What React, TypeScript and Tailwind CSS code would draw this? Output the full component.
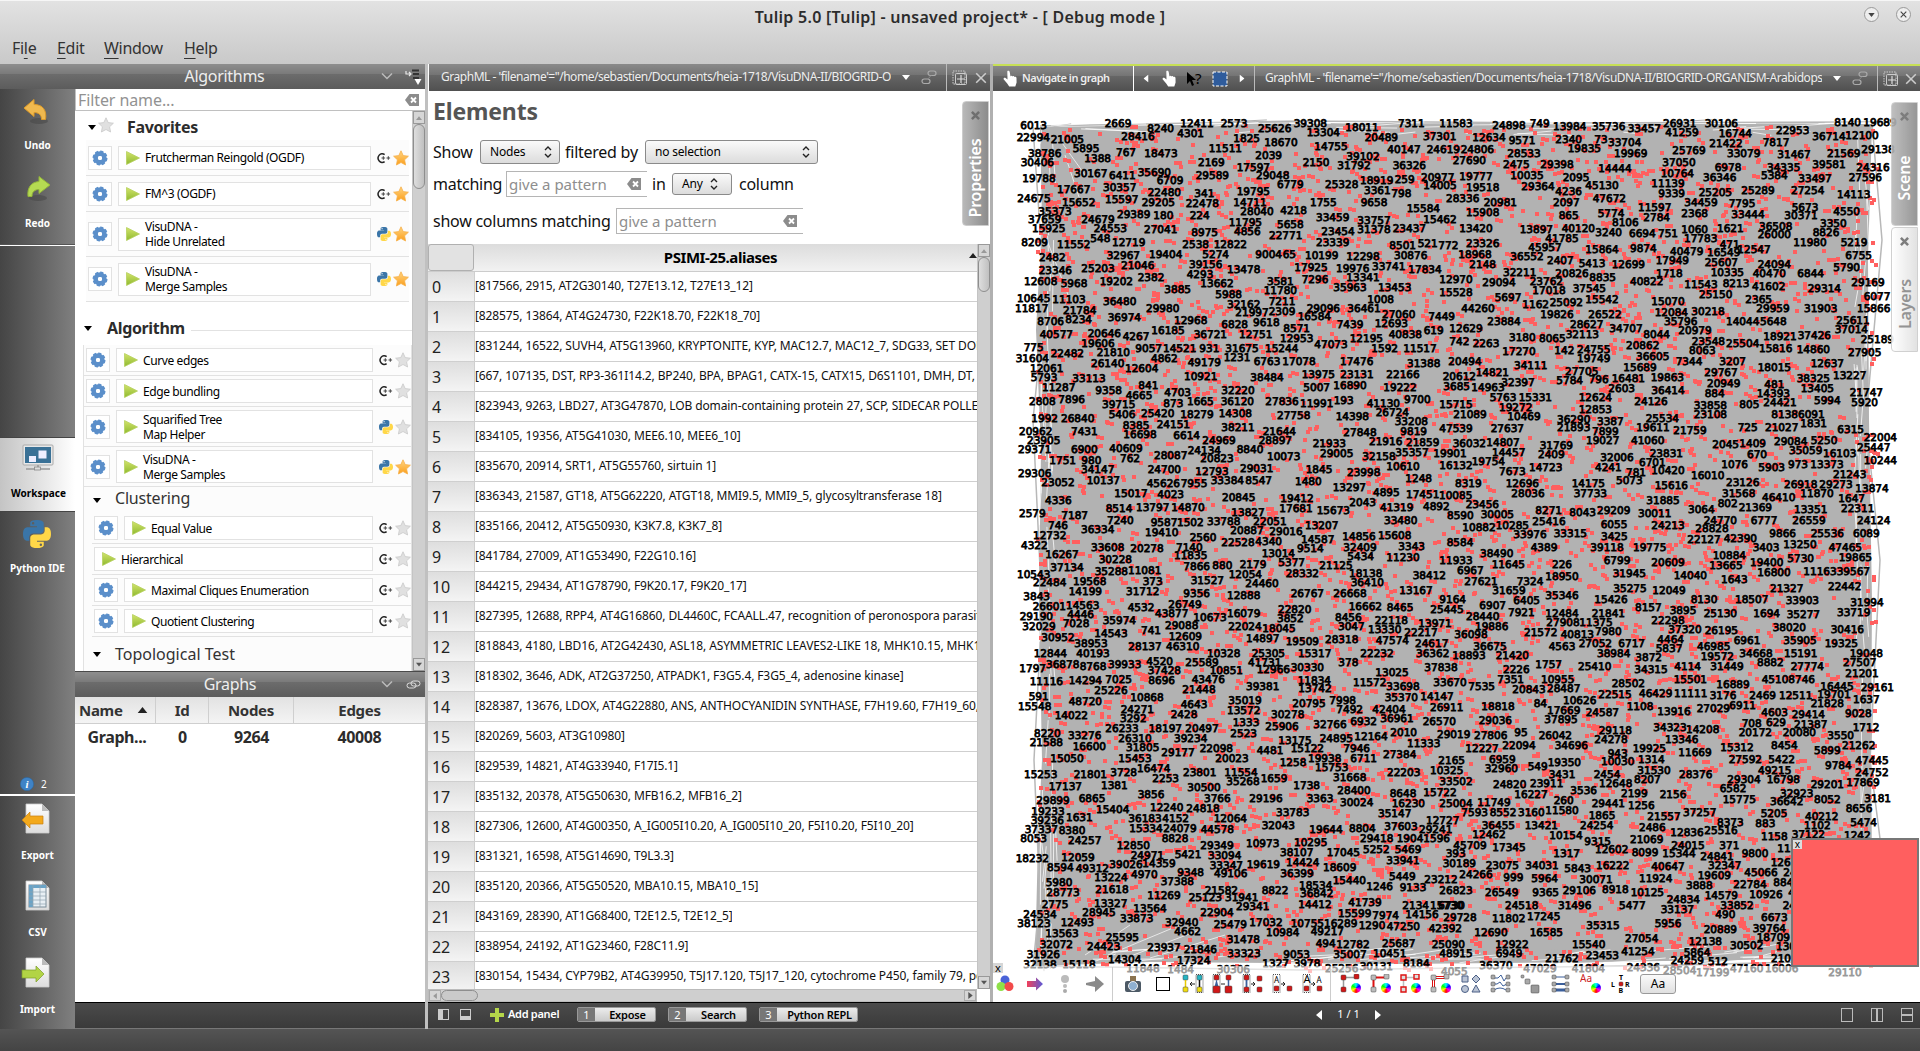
import React from "react";

/* ---------- graph view data ---------- */
/* Every tile lists "x y id" triples, in tile units, for the node labels. */
type Tile = { ox: number; oy: number; sx: number; sy: number; d: string };
const TILES: Tile[] = [
  { ox: 990, oy: 60, sx: 3, sy: 3, d: `
131 195 6013 384 188 2669 512 203 8240 621 188 12411 732 190 2573 854 203 25626 961 188 39308 1000 215 13304 1116 200 18011 1264 188 7311 1398 188 11583
130 231 22994 232 238 21005 444 228 28416 602 220 4301 770 233 1825 873 245 18670 1174 230 20489 1349 228 37301 1497 231 12634
288 265 5895 164 278 38786 408 275 767 513 278 18473 706 265 11511 1023 258 14755 1242 266 40147 1360 266 24619 1462 266 24806
323 293 1388 142 305 30406 836 286 2039 664 305 2169 790 321 17597 978 305 2150 1119 288 39102 1092 315 31792 1258 315 36326 1438 301 27690
302 338 30167 397 345 6411 493 335 35690 540 360 6709 147 353 19788 667 345 29589 848 345 29048 901 373 6779 1055 373 25328 1160 361 18919 1244 358 259 1343 350 20977 1458 348 19777
251 386 17667 389 380 30357 523 396 22480 643 400 341 790 393 19795 1162 391 3361 1234 400 798 1350 376 14005 1478 380 19518
132 415 24675 266 425 15652 395 418 15597 505 425 29205 637 430 22478 780 425 14711 1000 425 1755 1152 425 9658 1418 413 28336
195 453 35373 164 476 37659 324 476 24679 431 461 29389 520 465 180 629 465 224 801 453 28040 911 451 4218 1028 470 33459 1300 445 15584 1478 455 15908
176 505 15925 361 505 24553 512 506 27041 766 486 11795 901 493 5658 1152 480 33757 1350 478 15462
644 516 8975 772 513 4856 887 526 22771 1044 513 23454 1152 506 31378 1258 505 23437 1458 505 13420
134 545 8209 251 553 11552 331 535 548 416 545 12719 617 553 2538 721 551 12822 1028 545 23339 1238 556 8501 1313 550 521 1375 556 772 1478 548 23326
187 591 2482 400 586 32967 527 581 19404 677 583 5274 836 583 9004 898 583 65 995 586 10199 1119 588 12298 1262 585 30876 1455 583 18968
196 630 23346 324 623 25203 443 616 21046 647 611 39156 761 628 13478 963 621 17925 1088 623 19976 1196 618 33741 1305 626 17834 1478 611 2148
152 663 12608 252 668 5968 379 663 19202 483 651 2382 630 641 4293 681 668 13662 871 663 3581 975 656 7296 1119 651 13341 1398 656 12970
563 686 3885 716 703 5988 871 691 11780 1080 680 35963 1214 680 13453 1398 695 15528
131 715 10645 237 716 11103 389 723 36480 761 731 32162 876 723 7211 1172 716 1008
125 743 11817 269 750 21784 518 743 29980 786 756 21997 876 753 2309 1000 743 29096 1122 743 36461 1226 761 27060 1464 743 44260
182 783 8706 266 778 8234 403 771 36974 602 780 12968 734 791 6828 829 785 9618 973 768 16584 1080 793 7439 1204 788 12693 1355 768 7449
199 823 40577 343 818 20646 438 828 4267 534 810 16185 661 823 36721 797 823 12751 920 803 8571 920 835 12953 1129 835 12195 1246 821 40838 1331 811 619 1428 803 12629
324 848 19606 131 861 775 476 863 9057 569 865 14521 658 863 931 756 863 31675 875 865 15244 1023 853 47073 1184 863 1592 1290 863 11517 1408 843 742 1488 850 2263
232 878 22482 370 875 21810` },
  { ox: 1480, oy: 60, sx: 3, sy: 3, d: `
87 195 24898 179 190 749 269 198 13984 386 198 35736 493 205 33457 599 188 26931 606 215 41259 724 190 30106 766 218 16744 938 211 22953 1103 186 8140 1200 186 19689
126 240 9571 266 238 2340 363 236 73 434 246 33704 738 250 21422 888 246 7817 1047 228 36714 1146 226 12100
132 280 28533 313 265 19835 452 278 19969 627 270 25769 791 280 33079 942 283 31467 1091 278 21569 1194 266 29138
109 313 2475 231 313 29398 405 325 14444 597 306 37050 592 338 10764 744 320 6978 911 320 34335 883 345 5384 1047 311 39581 1179 321 24316
141 345 10035 288 350 2095 174 378 29364 366 376 45130 266 393 4236 564 368 11139 719 350 36346 1005 355 33497 1156 350 27596
575 398 9339 706 395 25205 834 391 25289 983 390 27254 1121 403 14113
61 425 20981 259 425 2097 388 413 47672 524 440 11597 663 425 34459 786 428 7795 975 440 5673 1100 453 4550
266 465 865 393 458 5774 436 485 8106 530 470 2784 644 458 2368 804 463 33444 963 466 30371 1060 488 3350
169 506 13897 295 505 40120 386 516 3240 487 518 6694 564 518 751 644 506 1060 751 505 1621 887 498 36508
246 533 41785 662 533 17783 749 551 471 883 523 26000 1038 516 8826 990 545 11980 1122 545 5219
195 561 45957 366 566 15864 490 565 9874 620 573 40479 731 576 16549 822 566 12547 1136 585 6755
141 588 36552 241 600 2407 336 610 5413 445 611 12699 577 601 17949 724 605 25607 883 611 24094 1100 621 5790
119 635 32211 276 640 20826 368 651 8835 568 640 1718 742 636 10335 868 640 40470 992 640 6844
57 665 29094 199 663 23762 500 663 40822 663 671 11543 768 668 8213 866 678 41602 1164 666 29169
207 690 17018 328 685 37545 84 711 5697 707 703 25150 1033 685 29314
167 733 1162 259 725 25092 366 718 15542 564 723 15070 836 716 2365 1191 708 6077
231 761 19826 375 763 26522 574 756 12084 684 753 30218 879 745 29959 1022 745 31903 1181 743 15866
72 783 23884 320 793 28627 438 805 34707 602 783 35796 645 811 20979 788 783 14044 880 783 5648 1119 780 25611 1114 808 37014
127 830 3180 217 833 8065 307 823 32113 530 823 8044 685 843 23548 788 848 25504 900 828 18921 1003 825 37426 1192 838 25189
117 873 17270 253 871 142 341 868 24755 341 895 19749 488 855 20862 518 888 36605 667 871 8063 887 865 15816 1000 868 14860 1154 875 27905
152 915 34111 627 903 7344 758 903 3207 883 921 18015 1042 908 12637
37 935 14821 305 933 27705 114 965 32397 269 961 5784 356 958 796 445 953 16481 562 951 19863 480 921 15689 723 936 29767 1000 953 38325 1109 945 13227
425 983 2603 564 990 36414 731 970 20949 704 998 884 883 973 481 880 998 14393 1012 983 13405 1159 995 21747
69 1011 5763 166 1011 15331 346 1011 12624 107 1040 19272 346 1046 12853 513 1023 24126 691 1036 33858 808 1031 805 900 1026 24421 1042 1021 5994 1154 1025 5920` },
  { ox: 1000, oy: 350, sx: 3, sy: 2.8, d: `
97 22 31604 140 50 12061 323 38 26140 425 50 12604 493 22 4862 613 33 49179 711 20 1231 801 30 6763 897 30 17078 1070 30 17476 1271 36 31388 1395 30 20494
132 75 5793 267 78 33113 602 72 10921 801 75 38484 955 68 13975 1071 68 23131 1209 68 22166 1378 72 20612
176 105 11287 326 111 9358 445 97 841 417 125 4665 533 117 4703 714 113 32220 950 105 5007 1050 97 16890 1200 105 19222 1370 100 3685 1464 103 14963
127 144 2808 215 137 7896 356 151 39715 520 150 873 601 144 1665 712 142 36120 846 142 27836 950 150 11991 1031 141 193 1150 149 41130 1252 137 9700 1368 151 15715
134 191 1992 233 192 26840 366 180 5406 473 178 25420 591 179 18279 706 177 14308 881 181 27758 1057 186 14398 1177 174 26724 1410 179 21089
107 227 20962 253 227 7431 408 210 8385 520 208 24151 714 215 38211 838 227 21644 1080 230 27848 1234 199 33208 1241 227 9819 1368 220 47539
131 252 23905 420 235 16698 560 237 6614 657 252 24969 826 252 28897 988 262 21933 1157 255 21916 1268 258 21859 1408 261 36032
104 278 29371 253 278 6900 378 274 40609 613 279 24134 750 278 8840 512 293 28087 1010 290 29005 1137 296 32158 1236 286 35357 1350 288 19901
188 307 1751 274 308 980 390 303 762 651 303 20823 851 297 10073 1209 325 10610 1368 322 16132 1465 310 19754
104 344 29306 293 334 34147 493 334 24700 636 339 12793 770 330 29031 957 334 1845 1091 341 23998 1256 360 1248
174 369 23052 310 365 10137 490 373 45626 582 374 7955 682 365 33384 776 364 8547 925 367 1480 1048 385 13297 1405 373 8319
393 402 15017 512 404 4023 716 411 20845 891 415 19412 1159 399 4895 1268 403 17451 1367 407 10085
175 419 4336 357 442 8514 458 439 13797 564 439 14870 744 453 13827 888 443 17681 1000 448 15673 1088 425 2043 1190 439 41319 1309 436 4892 1447 431 23456
97 457 2579 224 462 7187 361 475 7240 492 481 9587 571 483 1502 671 479 33788 810 478 22051 1202 475 33480 1381 463 8590 1492 460 30005
174 490 746 293 502 36334 485 511 19410 741 503 20887 858 506 29016 965 489 13207 1437 495 10882
149 518 12732 609 525 2560 714 539 22528 806 534 4340 953 530 14587 1077 520 14856 1184 519 15608
103 546 4322 323 551 33608 441 554 20278 568 551 7140 835 568 13014 931 554 9514 1080 551 32409 1235 550 3343 1380 538 8584
186 571 16267 346 586 30228 572 575 11835 1082 576 5434 1209 579 11230 1368 589 11933 1490 570 38490
201 608 37134 334 620 35288 434 615 11081 590 605 7866 667 601 880 759 599 2179 875 595 5377 1008 601 21125 1411 617 6967
101 627 10543 149 650 22484 269 648 19568 458 647 373 622 643 31527 736 627 12054 907 624 28332 1097 624 18138 1288 629 38412
256 674 14199 786 653 24460 1102 650 36410 1443 648 27621
110 690 3843 428 675 31712 590 682 9356 731 685 12888 922 681 26767 1050 682 26668 1248 673 13167 1358 698 9164 1478 715 6907
148 716 26601 248 713 14563 423 720 4532 555 711 26749 884 726 22820 1096 718 16662 1200 720 8465 1341 726 25445
109 745 29190 242 739 4446 228 765 7028 358 756 35974 515 737 43877 630 747 10673 731 736 16079 871 752 3852 1045 747 8456 1174 756 22118 1305 764 13971 1448 745 28440
117 772 32029 453 785 741 545 770 29088 735 772 22024 837 780 18045 1054 772 3047 1154 782 13330 1475 772 19886
174 803 30952 333 792 14543 556 801 12609 788 806 14897 1263 789 22217 1413 796 36098
273 822 38953 435 828 28137 548 828 46310 907 814 19509 1025 810 28318 1177 813 47574 1295 820 24617 1470 828 36675
151 848 12844 279 848 40193 671 848 10328 805 848 25305 944 848 15317 1131 848 22232 1298 848 36362 1407 853 18893
98 890 1797 188 879 36878 279 886 8768 374 879 39933 479 872 4520 606 873 25589 794 873 41731 1045 873 378 493 895 37428 679 896 10851 820 894 12966 922 889 30330 1323 887 37838
139 928 11116 256 925 14294 356 922 7025 485 924 8696 625 922 43476 943 924 11834 1176 902 13025 1109 931 11572 1209 940 33698 1350 931 33670 1445 940 7535
333 953 25226 597 950 21448 788 940 39381 945 947 13742
116 968 591 256 982 48720 441 972 10868 735 981 35019 582 991 4643 927 988 20795 1028 980 7998 1204 972 35370 1311 968 14147
104 996 15548 412 1005 24271 731 1007 13572 1049 1005 7492 1167 1005 42404 1340 1000 26911 1494 996 18818
214 1023 14022 400 1032 3292 552 1019 2428 863 1019 30278 1191 1032 36961 738 1042 1333 990 1048 32766 1091 1040 6932 1318 1040 26570 1486 1035 29036
366 1060 26233 496 1059 18197 606 1060 20497 846 1054 25906 1211 1069 2010 731 1073 2523
142 1073 8220 139 1098 21588 254 1079 33276 405 1088 26310 572 1088 39234 885 1091 13175 1009 1086 24895 1113 1082 12164 1361 1075 29019 1472 1078 27806
268 1108 16600 428 1111 31805 649 1114 22098 534 1126 29177 810 1120 4481 922 1115 15122 1070 1114 7946 1271 1100 11333 1446 1114 12227
201 1144 15050 405 1144 15453 696 1143 20023 879 1155 1258 974 1144 19938 1091 1144 6711 1199 1131 27384 1355 1147 2165
122 1187 15253 271 1187 21801 371 1182 3728 461 1170 16474 599 1182 23801 723 1181 11554 995 1168 15753 1211 1182 22203 1340 1176 10325
497 1198 2253 729 1206 35268 822 1199 1659 1049 1196 31668 1368 1207 33502
196 1220 17137 343 1219 1381 612 1223 30500 920 1218 1738 1062 1232 28400 1209 1240 8648 1320 1238 15722
159 1260 29899 276 1256 6865 453 1244 3856 652 1254 3766 798 1256 29196 960 1255 3363 1070 1266 30024 1225 1268 16230 1368 1268 25004 1482 1266 11749
144 1292 19233 338 1286 15404 500 1281 12240 609 1284 24818 878 1293 33783 1184 1297 35147 1424 1295 7593
142 1315 39236 238 1308 1631 435 1311 36183 527 1311 4152 691 1311 12064 835 1330 32043 1328 1315 12727
124 1342 37337 216 1343 8380 438 1340 15334 540 1340 24079 652 1341 44578 978 1342 19644 1087 1339 8804 1203 1332 37603 1307 1342 29241
101 1368 8053 254 1373 24257 525 1367 8828 788 1380 10973 932 1379 10295 1130 1367 29418 1230 1367 1904 1310 1367 1596
400 1386 12850 651 1386 29349 890 1405 38107 1030 1405 17045 1129 1397 5252 1224 1397 5469
97 1423 18232 234 1419 12059 442 1414 24971 564 1411 5421 674 1414 33094 908 1433 14424 1209 1427 33941
181 1449 8594 277 1451 49312 378 1440 39026 477 1437 14359 679 1441 33347 790 1439 19619 1019 1448 18609
333 1477 13224 433 1467 4970 572 1461 9348 692 1465 49106 891 1465 36399 1207 1473 5449
177 1489 5980 532 1487 37388 1048 1485 15440 1323 1481 23212
189 1517 28773 336 1509 21618 664 1511 21582 825 1512 8822 947 1499 18534 1139 1500 1246 1239 1503 9133 1368 1511 26823
492 1525 11269 616 1532 25123 725 1532 31941 950 1521 36842` },
  { ox: 1470, oy: 410, sx: 3, sy: 3, d: `
162 18 10469 311 26 36290 421 33 3387 577 23 25534 721 11 23108 944 11 8138 1024 11 6091 1031 38 1831 1142 56 6315
112 53 27637 311 51 21893 406 63 7899 549 50 19611 660 61 21759 833 50 725 935 50 21027
99 95 14807 259 105 31769 398 91 19027 533 91 41060 767 101 2045 848 98 1409 962 93 29084 1062 90 5250 1231 81 22004
116 126 14457 244 133 2409 441 141 32006 589 128 23831 547 156 6701 861 131 670 1007 121 35059 1109 128 16103 1211 111 25447
127 183 7673 227 171 14723 415 171 4241 498 186 781 594 181 10420 794 161 1076 905 171 5903 984 163 973 1071 163 13373 1231 151 10244
157 218 12696 355 220 14175 478 211 5073 604 226 15616 713 196 16010 818 216 23126 992 221 26918 1098 221 29273 1139 191 21243 1206 233 13874
174 250 28036 361 250 37733 579 271 31885 806 250 31568 773 278 802 926 261 46410 1041 250 11870 1145 263 1647
236 300 8271 338 306 8043 431 300 29209 554 310 30011 694 298 3064 856 291 21369 1022 296 13351 1163 295 22311
127 345 10285 237 333 25416 432 343 6055 594 345 24213 751 330 24770 882 330 6777 1017 330 26559 1211 330 24124
180 371 33976 301 370 33315 433 378 3425 726 355 28828 702 386 22127 811 383 42390 938 370 9866 1072 368 25536 1189 368 6089
222 410 4389 411 410 39118 539 410 19775 888 410 3403 990 403 13250 1126 411 47465
115 461 11645 276 461 226 441 450 6799 594 456 20609 778 435 10884 768 465 13665 890 455 19400 992 445 5730 1156 440 19865
180 513 7324 276 498 18950 478 490 31945 661 495 14040 793 506 1643 912 486 16800 1050 483 11163 1150 483 39567
117 541 31659 480 533 35275 597 541 12049 950 533 21327 1124 528 22442
170 570 6405 276 555 35346 423 568 15426 535 590 8157 702 568 8130 845 568 18507 997 570 33903 1191 576 31994
154 605 7921 276 608 12484 415 608 21841 639 600 3895 751 608 25130 890 608 1694 1000 611 35277 1151 606 33719
279 636 27908 378 635 11375 594 631 22298 645 658 37320 754 660 26195 958 651 38020 1132 658 30416
212 666 21572 322 673 40813 415 663 7980 602 688 4464 831 690 6961 990 691 35905
276 708 4563 376 700 27052 485 700 6717 597 715 5837 731 708 46985 1114 700 19325
127 736 21420 431 728 38984 536 740 3872 742 738 19572 858 728 34668 901 755 8882 992 730 15191 1189 728 19048
236 761 1757 139 776 2226 374 768 25410 543 776 34315 653 768 4114 771 768 31449 1012 768 27774 1169 755 27507
122 806 7351 263 808 10955 475 820 28502 661 806 15501 789 821 16889 925 808 45108 1005 808 746 1176 788 21201
177 836 20843 281 833 28487 435 853 22515 557 850 46429 662 850 11111 759 856 3176 878 855 2469 977 855 12511 1101 828 16445 1222 831 29161
211 878 84 329 870 10626 281 901 17669 510 888 1108 397 906 24587 612 903 13916 730 893 27029 818 885 6911 1092 853 19701 1072 880 21828 1189 866 1637
273 926 37895 914 905 4603 1015 911 29414 1165 908 9028
153 965 95 256 975 26042 436 960 29118 423 988 24278 600 950 34323 698 956 14208 845 940 708 918 936 629 1022 943 21387 856 966 20172 988 966 20080 1188 950 1712
147 1006 22094 304 1005 34696 635 988 13346 538 1015 19925 675 1026 11669 801 1011 15312 943 1006 8454 1112 976 3550 1166 1006 21262
97 1048 6959 94 1075 32960 203 1068 549 283 1056 19350 443 1028 943 443 1053 10030 544 1048 1314 826 1046 27592 935 1048 5422 1072 1021 5899 1206 1051 47445
276 1091 3431 411 1091 2454 552 1080 31530 677 1091 28376 914 1080 49215 1105 1066 9784 1206 1086 24752
119 1121 24820 230 1120 23911 437 1120 12648 532 1108 8207 822 1106 29304 940 1106 16798 1072 1121 29201 1179 1116 17869
183 1151 16227 341 1141 3536 493 1148 2199 609 1151 2156 789 1133 6582 980 1148 32923
281 1171 260 415 1178 29441 514 1185 1256 808 1166 15775 950 1173 36642 1072 1168 8052 1223 1163 3181
99 1205 8552 184 1205 3160 276 1200 11580 396 1216 1865 582 1218 21557 689 1205 37257 912 1208 5205 1167 1195 8656 1055 1218 40212` },
  { ox: 1440, oy: 820, sx: 3, sy: 3, d: `
175 16 36455 304 16 13421 470 15 24254 637 20 2486 741 35 12836 843 30 25516 871 5 8373 976 8 883 1132 15 1102 1271 6 5474
147 43 12462 378 45 10154 473 63 9315 620 56 21069 1003 48 1158 1105 43 37122 1252 46 1242
90 75 45709 207 81 17345 380 100 1317 515 88 12602 615 96 8099 717 100 15344 744 75 24015 868 75 371 831 108 24841 945 98 9800 1052 83 1123
47 100 393 58 130 30189 187 135 23075 306 135 34031 413 145 5843 518 135 16222 684 138 40647 854 135 32347 1042 125 12652
108 163 24266 220 170 999 314 175 5964 468 178 30071 647 175 11924 823 166 19609 778 196 3888 963 156 45066 1060 156 241 930 193 22784 1040 186 8841
185 215 26549 317 215 9365 418 210 29106 526 206 8918 622 215 10125 730 236 24834 844 226 14579 978 221 10926 1085 215 4412
35 255 6730 245 255 24518 404 256 31496 577 255 5477 712 266 33137 891 255 33852 856 283 490 1068 255 2451
60 290 29728 206 295 11802 311 288 17245 489 315 35315 684 310 5956 841 326 20889 1003 291 6673 988 323 39764 1000 350 18709
153 335 12690 319 335 16585 605 353 27054 796 363 12138 920 376 30502 1058 378 13072
216 373 12922 207 400 6949 446 371 15540 594 393 41254 771 396 5864 1043 415 21022
366 413 21762 487 406 23453 742 420 24259 834 423 512
168 435 36370 300 443 47029 445 443 41804 610 440 24336 719 450 28504 818 455 17199 920 443 47160 1025 445 16006 1215 455 29110 43 453 4055` },
  { ox: 980, oy: 900, sx: 3, sy: 3, d: `
225 12 2775 392 8 13327 510 25 13564 357 35 28945 818 18 29341 1005 13 14412 1155 5 41739 1307 15 2134 1400 15 15730
180 42 24534 470 55 33873 711 35 22904 1124 38 15599 1217 46 7974 1326 43 14156
162 68 38123 292 65 12493 605 66 32940 751 73 25479 858 66 17032 982 70 10755 1082 70 16289 1176 75 1290 1270 78 47250 1396 83 42392
246 100 13563 623 93 4662 908 95 10984 1042 93 49217
427 110 25595 790 116 31478 1037 130 494 1119 131 12782 1256 128 25687 1405 133 25090
229 133 32072 371 138 24423 552 140 23937 661 146 21846 792 158 33323 950 161 9053 1110 163 35007 1229 160 10451 1428 160 48915
190 161 31926 434 178 14304 641 180 17324 887 190 1327 981 190 3978 1309 188 8184
180 193 32138 297 191 15118 489 205 11848 602 208 1484 760 208 30306 1085 203 25256 1189 197 30131` },
];

type Label = { x: number; y: number; t: string };
const LABELS: Label[] = TILES.flatMap((tile) => {
  const n = tile.d.trim().split(/\s+/);
  const out: Label[] = [];
  for (let i = 0; i + 2 < n.length; i += 3) {
    out.push({ x: tile.ox + Number(n[i]) / tile.sx, y: tile.oy + Number(n[i + 1]) / tile.sy, t: n[i + 2] });
  }
  return out;
});

function rng(seed: number) {
  let s = seed;
  return () => {
    s = (s * 1664525 + 1013904223) % 4294967296;
    return s / 4294967296;
  };
}

/* Scattered node squares, drawn as one path. */
const DOTS = (() => {
  const r = rng(77);
  let d = "";
  for (let i = 0; i < 5000; i++) {
    const x = 1036 + r() * 838;
    const y = 124 + r() * 842;
    const n = r() < 0.3 ? 2 : 1;
    for (let k = 0; k < n; k++) {
      const px = Math.round(x + k * 4);
      const py = Math.round(y + k * (r() * 5 - 1));
      d += `M${px} ${py}h4v4h-4z`;
    }
  }
  return d;
})();

const hair = (seed: number, count: number, spread: number) => {
  const r = rng(seed);
  let d = "";
  for (let i = 0; i < count; i++) {
    const side = Math.floor(r() * 4);
    const t = r();
    const len = 12 + r() * 60;
    const off = r() * spread;
    const skew = r() * 8 - 4;
    if (side === 0) d += `M${1040 + off} ${130 + t * 800}l${skew} ${len}`;
    else if (side === 1) d += `M${1868 - off} ${130 + t * 800}l${skew} ${len}`;
    else if (side === 2) d += `M${1040 + t * 780} ${122 + off}l${len} ${skew}`;
    else d += `M${1040 + t * 780} ${964 - off}l${len} ${-skew - 4}`;
  }
  return d;
};

function GraphCanvas() {
  return (
    <svg className="absolute inset-0" width="927" height="911" viewBox="993 91 927 911">
      <path
        d="M1040 127L1250 124 1500 123 1700 124 1872 124 1868 260 1869 420 1872 600 1871 760 1872 860 1860 958 1600 962 1400 964 1150 962 1035 966 1038 840 1042 760 1039 600 1041 450 1036 330 1042 220z"
        fill="#b2b2b2"
      />
      <path d="M1033 127L1045 300 1033 420 1042 610 1034 760 1040 900 1033 965M1872 123L1882 240 1866 420 1880 560 1870 760 1884 870M1040 126L1300 121 1560 123 1890 122M1035 966L1300 970 1640 966 1880 960" stroke="#b8b8b8" strokeWidth="1.5" fill="none" />
      <path d={hair(5, 160, 12)} stroke="#b2b2b2" strokeWidth="1" fill="none" />
      <path d={hair(9, 170, 14)} stroke="#fff" strokeWidth="1" fill="none" opacity="0.75" />
      <path d="M1108 955L1180 925M1120 960L1200 930M1150 958L1225 935M1085 955L1130 925M1060 140L1085 175M1065 155L1080 200M1045 235L1070 300" stroke="#fff" strokeWidth="1" opacity="0.7" />
      <path d={DOTS} fill="#ff5f5f" />
      <g
        fontFamily="DejaVu Sans, sans-serif"
        fontSize="10.5"
        textAnchor="middle"
        fill="#000"
        stroke="#000"
        strokeWidth="0.8"
        textRendering="geometricPrecision"
      >
        {LABELS.map((l, i) => (
          <text key={i} x={l.x} y={l.y + 3.9}>
            {l.t}
          </text>
        ))}
      </g>
    </svg>
  );
}

/* ---------- icons ---------- */
const Gear = () => (
  <svg width="16" height="16" viewBox="0 0 16 16">
    <circle cx="8" cy="8" r="4.4" fill="none" stroke="#5b8fca" strokeWidth="4.6" />
    <circle cx="8" cy="8" r="6.6" fill="none" stroke="#5b8fca" strokeWidth="1.8" strokeDasharray="3.2 1.98" />
    <circle cx="8" cy="8" r="2.1" fill="#fff" />
  </svg>
);
const Play = () => (
  <svg width="14" height="14" viewBox="0 0 14 14" className="shrink-0">
    <path d="M.5.5L13.5 7 .5 13.5z" fill="url(#gPlay)" stroke="#b6d160" strokeWidth=".8" />
  </svg>
);
const Star = ({ on }: { on?: boolean }) => (
  <svg width="16" height="16" viewBox="0 0 16 16" className="shrink-0">
    <path
      d="M8 .8l2.2 4.8 5.2.6-3.8 3.6 1 5.2L8 12.5 3.4 15l1-5.2L.6 6.2l5.2-.6z"
      fill={on ? "url(#gStar)" : "#e0e0e0"}
      stroke={on ? "#f6b04a" : "#c9c9c9"}
      strokeWidth=".8"
    />
  </svg>
);
const Cpp = () => (
  <svg width="15" height="14" viewBox="0 0 15 14" className="shrink-0">
    <path d="M8.6 3.6A4 4.4 0 1 0 8.6 10.6" fill="none" stroke="#222" strokeWidth="1.5" />
    <path d="M5.500 7h3.600M7.300 5.200v3.600M10.500 7h3.600M12.300 5.200v3.600" stroke="#444" strokeWidth="1" />
  </svg>
);
const Python = ({ s }: { s: number }) => (
  <svg width={s} height={s} viewBox="0 0 24 24" className="shrink-0">
    <path
      fill="#3a75a8"
      d="M11.9 0C5.8 0 6.2 2.6 6.2 2.6v2.8H12v.8H3.9S0 5.8 0 11.9s3.4 5.8 3.4 5.8h2v-2.8s-.1-3.4 3.4-3.4h5.7s3.3 0 3.3-3.2V3.1S18.300 0 11.900 0zM8.700 1.800a1 1 0 1 1 0 2.100 1 1 0 0 1 0-2.100z"
    />
    <path
      fill="#ffd748"
      d="M12.100 24c6.100 0 5.700-2.600 5.700-2.600v-2.800H12v-.8h8.100S24 18.200 24 12.100s-3.400-5.800-3.400-5.800h-2v2.800s.1 3.400-3.400 3.400H9.500s-3.300 0-3.300 3.200v5.200S5.700 24 12.100 24zm3.200-1.800a1 1 0 1 1 0-2.100 1 1 0 0 1 0 2.100z"
    />
  </svg>
);
const Tri = ({ className = "" }: { className?: string }) => (
  <svg width="8" height="5" viewBox="0 0 8 5" className={className}>
    <path d="M0 0h8L4 5z" fill="currentColor" />
  </svg>
);
const Clear = () => (
  <svg width="14" height="12" viewBox="0 0 14 12" className="shrink-0">
    <path d="M4.500 0H14v12H4.500L0 6z" fill="#8c8c8c" />
    <path d="M6 3.500l5 5M11 3.500l-5 5" stroke="#fff" strokeWidth="1.800" />
  </svg>
);
const Chevron = ({ c = "#bbb" }: { c?: string }) => (
  <svg width="12" height="8" viewBox="0 0 12 8">
    <path d="M1 1.500L6 6.500 11 1.500" fill="none" stroke={c} strokeWidth="1.500" />
  </svg>
);
const Dock = () => (
  <svg width="17" height="17" viewBox="0 0 17 17">
    <path d="M7 1.500h7M8 5h6M8 9h6" stroke="#333" strokeWidth="2" />
    <path d="M1 2v3h5M4 3l2 2-2 2" stroke="#e8e8e8" fill="none" strokeWidth="1.200" />
    <path d="M9.500 10h7L13 16z" fill="#fff" />
  </svg>
);
const Chain = () => (
  <svg width="15" height="9" viewBox="0 0 15 9">
    <rect x="1" y="3" width="9" height="5" rx="2.500" fill="none" stroke="#ddd" />
    <rect x="5" y="1" width="9" height="5" rx="2.500" fill="none" stroke="#ddd" />
  </svg>
);
const Link = () => (
  <svg width="16" height="15" viewBox="0 0 16 15">
    <rect x="7" y="1" width="8" height="4.500" rx="2.200" fill="none" stroke="#aaa" strokeWidth="1.200" />
    <rect x="1" y="9" width="8" height="4.500" rx="2.200" fill="none" stroke="#aaa" strokeWidth="1.200" />
    <path d="M10 5.500L7 9" stroke="#888" />
  </svg>
);
const Target = () => (
  <svg width="16" height="16" viewBox="0 0 16 16">
    <rect x="1" y="1" width="12" height="13" fill="none" stroke="#ccc" strokeDasharray="1.500 1" />
    <rect x="3.500" y="3.500" width="11" height="11" rx="1" fill="none" stroke="#ccc" />
    <path d="M9 5v8M5 9h8" stroke="#ddd" strokeWidth="1.200" />
  </svg>
);
const Cross = ({ c = "#ccc", s = 10, w = 1.6 }: { c?: string; s?: number; w?: number }) => (
  <svg width={s} height={s} viewBox="0 0 10 10" className="shrink-0">
    <path d="M1 1l8 8M9 1L1 9" stroke={c} strokeWidth={w} />
  </svg>
);
const Hand = () => (
  <svg width="15" height="17" viewBox="0 0 15 17">
    <path d="M4.300 1.200c.9-.9 2.200-.3 2.400.8l.8 4.500c.2-.9 1.700-.9 2 .1.500-.8 1.800-.6 2 .4.700-.6 1.900-.2 2 .9l.1 4.600-1.300 4H6.200l-2-3L.6 9.200c-.4-1.200 1-2 2-1.200l1.900 1.600z" fill="#fff" />
  </svg>
);
const UpDown = () => (
  <svg width="8" height="12" viewBox="0 0 8 12">
    <path d="M1 4l3-3 3 3M1 8l3 3 3-3" fill="none" stroke="#222" strokeWidth="1.400" />
  </svg>
);

/* ---------- left bar ---------- */
const Doc = ({ children }: { children: React.ReactNode }) => (
  <svg width="32" height="32" viewBox="0 0 32 32">
    <path d="M6 1h16l7 7v22H6z" fill="url(#gDoc)" stroke="#ccc" strokeWidth=".8" />
    <path d="M22 1v7h7z" fill="#bbb" />
    {children}
  </svg>
);

function SideBar() {
  const lab = "absolute inset-x-0 text-center text-[10px] font-bold leading-3 text-white";
  return (
    <div className="flex h-[940px] w-[75px] flex-col bg-linear-to-r from-[#454545] to-[#808080]">
      <div className="relative h-[78px]">
        <svg className="absolute left-[22px] top-[9px]" width="28" height="28" viewBox="0 0 28 28">
          <ellipse cx="17" cy="23" rx="9" ry="3" fill="#444" opacity=".5" />
          <path d="M2 10L12 1.500v5c9 0 13 6 11.500 15h-4c0-5-3-7-7.500-7v4z" fill="#f0b94f" stroke="#dd9a28" />
        </svg>
        <div className={`${lab} top-[50px]`}>Undo</div>
      </div>
      <div className="relative h-[79px] border-b border-white shadow-[0_-1px_0_#555_inset]">
        <svg className="absolute left-[25px] top-[8px]" width="28" height="28" viewBox="0 0 28 28">
          <ellipse cx="13" cy="23" rx="9" ry="3" fill="#444" opacity=".5" />
          <path d="M25 10L14 1.500v5C6 7 2 13 3 21.500h4c0-5 3-7 7-7v4z" fill="#b5da52" stroke="#93b53a" />
        </svg>
        <div className={`${lab} top-[50px]`}>Redo</div>
      </div>
      <div className="h-[191px]" />
      <div className="relative h-[75px] border-y border-[#444] bg-linear-to-r from-[#c4c4c4] to-white">
        <svg className="absolute left-[22px] top-[5px]" width="32" height="30" viewBox="0 0 32 30">
          <rect x="1" y="2" width="30" height="20" rx="1" fill="#e8e8e8" stroke="#aaa" />
          <rect x="3" y="4" width="26" height="16" fill="#3a7196" />
          <rect x="16.500" y="7.500" width="8" height="8" fill="#eef" />
          <rect x="7" y="13" width="7" height="6" fill="#eef" />
          <path d="M16 22v4M4 26h24" stroke="#999" strokeWidth="1.500" />
          <rect x="12.500" y="24" width="6" height="3" fill="#ddd" stroke="#888" strokeWidth=".8" />
        </svg>
        <div className="absolute inset-x-0 top-[49px] pl-[2px] text-center text-[10px] font-bold leading-3 text-black">Workspace</div>
      </div>
      <div className="relative h-[75px]">
        <div className="absolute left-[23px] top-[8px]"><Python s={28} /></div>
        <div className={`${lab} top-[50px]`}>Python IDE</div>
      </div>
      <div className="flex h-[209px] items-end border-b-2 border-white pb-[3px] pl-[20px]">
        <svg width="14" height="14" viewBox="0 0 14 14">
          <circle cx="7" cy="7" r="6.600" fill="#3f83c6" stroke="#2c69a5" strokeWidth=".6" />
          <text x="7" y="11" textAnchor="middle" fontFamily="Liberation Serif, serif" fontStyle="italic" fontWeight="bold" fontSize="11" fill="#fff">i</text>
        </svg>
        <span className="ml-[7px] text-[10px] leading-[14px] text-white">2</span>
      </div>
      <div className="relative h-[77px]">
        <div className="absolute left-[20px] top-[7px]">
          <Doc><path d="M2 17l8-8v4h13v8H10v4z" fill="#f3a91c" stroke="#c87f10" strokeWidth=".7" /></Doc>
        </div>
        <div className={`${lab} top-[53px]`}>Export</div>
      </div>
      <div className="relative h-[77px]">
        <div className="absolute left-[20px] top-[7px]">
          <Doc>
            <rect x="9" y="5" width="17" height="22" fill="#e8eff4" stroke="#7a8c99" />
            <path d="M9 5h17v3H9zM9 5h4v22H9z" fill="#6aa3c6" />
            <path d="M9 12h17M9 16h17M9 20h17M9 24h17M13 5v22M20 5v22" stroke="#8fa3b0" strokeWidth=".7" />
          </Doc>
        </div>
        <div className={`${lab} top-[53px]`}>CSV</div>
      </div>
      <div className="relative h-[77px]">
        <div className="absolute left-[20px] top-[7px]">
          <Doc><path d="M24 17l-8-8v4H2v8h14v4z" fill="#b2d445" stroke="#7b9c2a" strokeWidth=".7" /></Doc>
        </div>
        <div className={`${lab} top-[53px]`}>Import</div>
      </div>
    </div>
  );
}

/* ---------- algorithms ---------- */
function AlgoRow({ lines, py, fav, gear = true, cls }: { lines: string[]; py?: boolean; fav?: boolean; gear?: boolean; cls: string }) {
  return (
    <div className={`flex items-center border-b border-[#e2e2e2] ${cls}`}>
      {gear && (
        <div className="mr-[6px] flex h-6 w-6 shrink-0 items-center justify-center border border-[#e2e2e2] bg-white">
          <Gear />
        </div>
      )}
      <div className={`flex grow items-center border border-[#e2e2e2] bg-white pl-[7px] ${lines.length > 1 ? "h-[33px]" : "h-6"}`}>
        <Play />
        <div className="ml-[5px] whitespace-nowrap text-[12px] leading-[15px] tracking-[-0.4px] text-black">
          {lines.map((l) => (
            <div key={l}>{l}</div>
          ))}
        </div>
      </div>
      <div className="ml-[4px] flex w-[17px] justify-center">{py ? <Python s={14} /> : <Cpp />}</div>
      <div className="ml-[1px]"><Star on={fav} /></div>
    </div>
  );
}

const VScroll = ({ thumb }: { thumb: string }) => (
  <div className="flex w-[13px] shrink-0 flex-col border-l border-[#c4c4c4] bg-[#cfcfcf]">
    <div className="flex h-[13px] shrink-0 items-center justify-center border border-[#999] bg-[#d6d6d6] text-[#999]"><Tri className="h-[4px] w-[6px] rotate-180" /></div>
    <div className={`shrink-0 rounded-full border border-[#8e8e8e] bg-linear-to-r from-[#dedede] to-[#c0c0c0] ${thumb}`} />
    <div className="grow" />
    <div className="flex h-[13px] shrink-0 items-center justify-center border border-[#999] bg-[#d6d6d6] text-[#555]"><Tri className="h-[5px] w-[6px]" /></div>
  </div>
);

function PanelTitle({ title, dock, cls }: { title: string; dock?: boolean; cls: string }) {
  return (
    <div className={`relative flex h-[25px] items-center justify-center bg-[linear-gradient(#8e8e8e,#7a7a7a_40%,#6c6c6c_41%,#5c5c5c)] pb-px text-[16px] tracking-[-0.3px] text-[#eee] ${cls}`}>
      <span>{title}</span>
      <div className="absolute right-[32px] top-[8px]"><Chevron /></div>
      <div className="absolute right-[3px] top-[5px]">{dock ? <Dock /> : <div className="pr-[1px] pt-[3px]"><Chain /></div>}</div>
    </div>
  );
}

function LeftPanel() {
  return (
    <div className="flex w-[350px] flex-col">
      <div className="flex h-[22px] items-center justify-between border-b border-l border-[#c0c0c0] bg-white pl-[2px] pr-[6px]">
        <span className="text-[16px] leading-5 tracking-[-0.1px] text-[#929292]">Filter name...</span>
        <Clear />
      </div>
      <div className="flex h-[560px] overflow-hidden bg-white">
        <div className="w-[337px] shrink-0">
          <div className="ml-[11px] w-[323px] bg-[#fcfcfc]">
            <div className="flex h-[29px] items-center bg-white pb-[1px] pl-[2px] pt-[4px]">
              <Tri className="text-black" />
              <div className="-mt-[4px] ml-[2px]"><Star /></div>
              <span className="ml-[13px] text-[16px] font-bold tracking-[-0.35px] text-[#2c2c2c]">Favorites</span>
            </div>
            <AlgoRow cls="h-[36px] pl-[2px]" fav lines={["Frutcherman Reingold (OGDF)"]} />
            <AlgoRow cls="h-[36px] pl-[2px]" fav lines={["FM^3 (OGDF)"]} />
            <AlgoRow cls="h-[45px] pl-[2px]" fav py lines={["VisuDNA -", "Hide Unrelated"]} />
            <AlgoRow cls="h-[45px] pl-[2px]" fav py lines={["VisuDNA -", "Merge Samples"]} />
          </div>
          <div className="flex h-[43px] items-end pb-[5px]">
            <Tri className="mb-[9px] ml-[9px] text-black" />
            <span className="ml-[15px] text-[16px] font-bold leading-6 tracking-[-0.35px] text-[#2c2c2c]">Algorithm</span>
            <div className="mb-[9px] ml-[6px] h-px grow bg-[#e2e2e2]" />
          </div>
          <div className="ml-[8px] w-[329px] border-x border-[#e2e2e2] bg-[#fcfcfc]">
            <AlgoRow cls="h-[31px] pl-[2px]" lines={["Curve edges"]} />
            <AlgoRow cls="h-[31px] pl-[2px]" lines={["Edge bundling"]} />
            <AlgoRow cls="h-[40px] pl-[2px]" py lines={["Squarified Tree", "Map Helper"]} />
            <AlgoRow cls="h-[40px] pl-[2px]" py fav lines={["VisuDNA -", "Merge Samples"]} />
            <div className="flex h-[26px] items-center pl-[9px]">
              <Tri className="text-black" />
              <span className="-mt-[4px] ml-[14px] text-[16px] tracking-[-0.2px] text-[#333]">Clustering</span>
            </div>
            <div className="ml-[8px]">
              <AlgoRow cls="h-[31px] pl-[2px]" lines={["Equal Value"]} />
              <AlgoRow cls="h-[31px] pl-[2px]" gear={false} lines={["Hierarchical"]} />
              <AlgoRow cls="h-[31px] pl-[2px]" lines={["Maximal Cliques Enumeration"]} />
              <AlgoRow cls="h-[31px] pl-[2px]" lines={["Quotient Clustering"]} />
            </div>
            <div className="flex h-[34px] items-center pl-[9px]">
              <Tri className="text-black" />
              <span className="ml-[14px] text-[16px] tracking-[0px] text-[#333]">Topological Test</span>
            </div>
          </div>
        </div>
        <VScroll thumb="h-[65px]" />
      </div>
      <PanelTitle title="Graphs" cls="mt-[1px] pr-[40px] !pl-0" />
      <div className="flex h-[27px] border-b border-[#cfcfcf] bg-linear-to-b from-[#e2e2e2] to-[#f4f4f4] text-center text-[15px] font-bold tracking-[-0.3px] text-[#333]">
        <div className="flex w-[81px] items-center border-r border-[#cfcfcf] pl-[4px]">
          <span>Name</span>
          <Tri className="ml-[14px] h-[6px] w-[11px] rotate-180 text-[#222]" />
        </div>
        <div className="flex w-[53px] items-center justify-center border-r border-[#cfcfcf]">Id</div>
        <div className="flex w-[85px] items-center justify-center border-r border-[#cfcfcf]">Nodes</div>
        <div className="flex w-[131px] items-center justify-center">Edges</div>
      </div>
      <div className="h-[278px] bg-white">
        <div className="flex h-[26px] items-center text-center text-[16px] font-bold tracking-[-0.4px] text-[#2c2c2c]">
          <div className="w-[81px] pl-[3px]">Graph...</div>
          <div className="w-[53px]">0</div>
          <div className="w-[85px]">9264</div>
          <div className="w-[131px]">40008</div>
        </div>
      </div>
      <div className="h-[27px] border-b border-t border-b-[#777] border-t-black bg-linear-to-b from-[#4b4b4b] to-[#3a3a3a]" />
    </div>
  );
}

/* ---------- table view ---------- */
const ROWS = [
  "[817566, 2915, AT2G30140, T27E13.12, T27E13_12]",
  "[828575, 13864, AT4G24730, F22K18.70, F22K18_70]",
  "[831244, 16522, SUVH4, AT5G13960, KRYPTONITE, KYP, MAC12.7, MAC12_7, SDG33, SET DOMAIN",
  "[667, 107135, DST, RP3-361I14.2, BP240, BPA, BPAG1, CATX-15, CATX15, D6S1101, DMH, DT, EBSB2",
  "[823943, 9263, LBD27, AT3G47870, LOB domain-containing protein 27, SCP, SIDECAR POLLEN, T23",
  "[834105, 19356, AT5G41030, MEE6.10, MEE6_10]",
  "[835670, 20914, SRT1, AT5G55760, sirtuin 1]",
  "[836343, 21587, GT18, AT5G62220, ATGT18, MMI9.5, MMI9_5, glycosyltransferase 18]",
  "[835166, 20412, AT5G50930, K3K7.8, K3K7_8]",
  "[841784, 27009, AT1G53490, F22G10.16]",
  "[844215, 29434, AT1G78790, F9K20.17, F9K20_17]",
  "[827395, 12688, RPP4, AT4G16860, DL4460C, FCAALL.47, recognition of peronospora parasitica 4",
  "[818843, 4180, LBD16, AT2G42430, ASL18, ASYMMETRIC LEAVES2-LIKE 18, MHK10.15, MHK10_15",
  "[818302, 3646, ADK, AT2G37250, ATPADK1, F3G5.4, F3G5_4, adenosine kinase]",
  "[828387, 13676, LDOX, AT4G22880, ANS, ANTHOCYANIDIN SYNTHASE, F7H19.60, F7H19_60, TANNIN",
  "[820269, 5603, AT3G10980]",
  "[829539, 14821, AT4G33940, F17I5.1]",
  "[835132, 20378, AT5G50630, MFB16.2, MFB16_2]",
  "[827306, 12600, AT4G00350, A_IG005I10.20, A_IG005I10_20, F5I10.20, F5I10_20]",
  "[831321, 16598, AT5G14690, T9L3.3]",
  "[835120, 20366, AT5G50520, MBA10.15, MBA10_15]",
  "[843169, 28390, AT1G68400, T2E12.5, T2E12_5]",
  "[838954, 24192, AT1G23460, F28C11.9]",
  "[830154, 15434, CYP79B2, AT4G39950, T5J17.120, T5J17_120, cytochrome P450, family 79, polypeptide",
];

const HEADBG = "bg-[linear-gradient(#8a8a8a,#747474_40%,#666_41%,#505050)]";

const Combo = ({ text, cls }: { text: string; cls: string }) => (
  <div className={`flex items-center justify-between rounded-[3px] border border-[#8a8a8a] bg-linear-to-b from-[#fafafa] to-[#dcdcdc] pl-[9px] pr-[7px] text-[12px] tracking-[-0.2px] text-black ${cls}`}>
    <span>{text}</span>
    <UpDown />
  </div>
);
const Pattern = ({ cls }: { cls: string }) => (
  <div className={`flex h-[26px] items-center justify-between border-y border-l border-[#b5b5b5] bg-white pl-[2px] pr-[6px] text-[15px] tracking-[0px] text-[#8e8e8e] ${cls}`}>
    <span>give a pattern</span>
    <Clear />
  </div>
);

const SideTab = ({ text, active, cls }: { text: string; active?: boolean; cls: string }) => (
  <div
    className={`absolute flex w-[27px] flex-col items-center rounded-l-[4px] border border-[#ccc] pt-[9px] ${
      active ? "bg-linear-to-r from-[#b8b8b8] to-[#8c8c8c] text-white" : "bg-linear-to-r from-white to-[#e0e0e0] text-[#888]"
    } ${cls}`}
  >
    <Cross c="#6f6f6f" w={2.8} s={9} />
    <div className="flex w-[24px] grow items-center justify-center pt-[10px]">
      <div className="-rotate-90 whitespace-nowrap text-[16px] font-semibold leading-none tracking-[-0.2px]">{text}</div>
    </div>
  </div>
);

function TablePanel() {
  return (
    <div className="relative flex h-[938px] w-[562px] flex-col bg-white">
      <div className={`flex h-[27px] shrink-0 items-center border-l border-white text-[12px] text-[#eee] ${HEADBG}`}>
        <div className="mb-[2px] ml-[12px] w-[450px] overflow-hidden whitespace-nowrap tracking-[-0.47px]">
          GraphML - 'filename'="/home/sebastien/Documents/heia-1718/VisuDNA-II/BIOGRID-ORGANISM
        </div>
        <Tri className="ml-[11px] text-white" />
        <div className="ml-[11px]"><Link /></div>
        <div className="ml-[9px] h-full w-px bg-[#bbb]" />
        <div className="ml-[5px]"><Target /></div>
        <div className="ml-[7px]"><Cross s={12} w={1.3} /></div>
      </div>
      <div className="flex h-[153px] shrink-0 flex-col pl-[5px] text-[16px] tracking-[-0.25px] text-[#111]">
        <div className="mt-[4px] h-[32px] text-[23px] font-bold leading-[32px] tracking-[-0.15px] text-[#555]">Elements</div>
        <div className="mt-[13px] flex h-[24px] items-center">
          <span className="w-[47px]">Show</span>
          <Combo text="Nodes" cls="h-6 w-[80px]" />
          <span className="w-[85px] pl-[5px]">filtered by</span>
          <Combo text="no selection" cls="h-6 w-[173px]" />
        </div>
        <div className="mt-[7px] flex h-[26px] items-center">
          <span className="w-[73px]">matching</span>
          <Pattern cls="w-[141px]" />
          <span className="w-[25px] pl-[5px]">in</span>
          <Combo text="Any" cls="h-[22px] w-[60px] pr-[13px]" />
          <span className="pl-[7px]">column</span>
        </div>
        <div className="mt-[11px] flex h-[26px] items-center">
          <span className="w-[183px]">show columns matching</span>
          <Pattern cls="w-[187px]" />
        </div>
      </div>
      <div className="flex h-[745px] shrink-0">
        <div className="w-[549px] overflow-hidden">
          <div className="flex h-[28px] border-b border-[#ccc] bg-linear-to-b from-[#dcdcdc] to-[#f2f2f2]">
            <div className="w-[46px] rounded-[3px] border border-[#b0b0b0] bg-[#e2e2e2]" />
            <div className="flex grow items-center justify-center pr-[10px] text-[15px] font-bold tracking-[-0.45px] text-black">PSIMI-25.aliases</div>
            <Tri className="-ml-[8px] mt-[9px] rotate-180 text-[#222]" />
          </div>
          {ROWS.map((r, i) => (
            <div key={i} className="flex h-[30px] border-b border-[#cfcfcf]">
              <div className="flex w-[47px] shrink-0 items-center border-r border-[#cfcfcf] bg-linear-to-b from-[#dedede] to-[#f4f4f4] pl-[4px] text-[16px] tracking-[-0.2px] text-[#222]">{i}</div>
              <div className="overflow-hidden whitespace-nowrap text-[12px] leading-[27px] tracking-[-0.11px] text-[#111]">{r}</div>
            </div>
          ))}
        </div>
        <VScroll thumb="h-[35px]" />
      </div>
      <div className="flex h-[13px] w-[549px] shrink-0 border border-[#bbb] bg-[#cfcfcf]">
        <div className="flex w-[12px] items-center justify-center border border-[#aaa] bg-[#d6d6d6] text-[#999]"><Tri className="h-[4px] w-[6px] rotate-90" /></div>
        <div className="w-[37px] rounded-full border border-[#8e8e8e] bg-[#cacaca]" />
        <div className="grow" />
        <div className="flex w-[12px] items-center justify-center border border-[#aaa] bg-[#d6d6d6] text-[#555]"><Tri className="h-[5px] w-[7px] -rotate-90" /></div>
      </div>
      <SideTab text="Properties" active cls="right-[1px] top-[37px] h-[125px]" />
    </div>
  );
}

/* ---------- graph view tool bar ---------- */
const N = ({ x, y, c = "#d01818", s = 5 }: { x: number; y: number; c?: string; s?: number }) => (
  <rect x={x} y={y} width={s} height={s} rx="1" fill={c} stroke="#444" strokeWidth=".5" />
);
const Ic = ({ children }: { children: React.ReactNode }) => (
  <svg width="22" height="20" viewBox="0 0 22 20" className="mx-[4px] shrink-0">{children}</svg>
);
const Wheel = () => <foreignObject x="11" y="9" width="10" height="10"><div className="h-[10px] w-[10px] rounded-full bg-[conic-gradient(cyan,blue,magenta,red,yellow,lime,cyan)]" /></foreignObject>;
const Dots = ({ x = 1 }: { x?: number }) => <rect x={x} y=".5" width="7" height="18" fill="none" stroke="#222" strokeWidth=".8" strokeDasharray="1 1" />;

function GraphTools() {
  return (
    <div className="absolute inset-x-0 bottom-0 h-[36px] bg-white/60">
      <div className="absolute -top-[3px] left-0 flex h-[10px] w-[10px] items-center justify-center bg-[#ccc]/80 pb-[2px] text-[11px] leading-none text-black">x</div>
      <div className="mt-[6px] flex h-[24px] items-center">
        <div className="-ml-[3px] flex">
          <Ic><circle cx="11" cy="6" r="4.500" fill="#4a63d8" /><circle cx="7" cy="12.500" r="4.500" fill="#8ee048" /><circle cx="15" cy="12.500" r="4.500" fill="#f24a4a" /></Ic>
          <Ic><path d="M3 7h9V3.500l7 6.500-7 6.500V13H3z" fill="url(#gArr)" /></Ic>
          <Ic><circle cx="11" cy="5" r="4" fill="#bbb" /><circle cx="11" cy="12" r="2" fill="#bbb" /><circle cx="11" cy="17" r="2" fill="#aaa" /></Ic>
          <Ic><path d="M2 9l9-2V2l9 8-9 8v-5l-9-2z" fill="#8a8a8a" /></Ic>
        </div>
        <div className="ml-[2px] h-[34px] w-px bg-[#ccc]" />
        <div className="ml-[5px] flex">
          <Ic><rect x="3" y="7" width="16" height="11" rx="2" fill="#4c5965" /><rect x="8" y="2" width="6" height="5" fill="#8b7450" /><circle cx="11" cy="12" r="4.500" fill="#8fb0d0" stroke="#eee" /></Ic>
          <Ic><rect x="4.500" y="3.500" width="13" height="13" fill="#fff" stroke="#000" /></Ic>
          <Ic><N x={1} y={1} c="#29b5c4" /><path d="M3.500 6v8" stroke="#e6c800" strokeWidth="1.500" /><N x={1} y={13} c="#f0dc10" /><path d="M8 10h5M8 10l2-2M8 10l2 2" stroke="#222" fill="none" /><Dots x={14} /><N x={15} y={1} c="#29b5c4" /><path d="M17.500 6v8" stroke="#111" strokeWidth="1.500" /><N x={15} y={13} c="#f0dc10" /></Ic>
          <Ic><Dots /><N x={2} y={1} /><path d="M4.500 5l-2 8h4z" fill="#3b5f9c" /><N x={1} y={12} s={7} /><path d="M9 10h4" stroke="#222" /><N x={14} y={1} /><path d="M16.500 6v7" stroke="#3b5f9c" strokeWidth="1.500" /><N x={13} y={12} s={7} /></Ic>
          <Ic><Dots /><N x={2} y={1} /><path d="M4.500 6v8" stroke="#3b5f9c" strokeWidth="1.800" /><N x={2} y={13} /><path d="M9 10h4l-2-2m2 2l-2 2" stroke="#222" fill="none" /><N x={15} y={2} /><N x={15} y={13} /></Ic>
          <Ic><Dots /><text x="4.500" y="9" fontSize="8" textAnchor="middle">A</text><N x={2} y={12} /><path d="M9 10h4l-2-2m2 2l-2 2" stroke="#222" fill="none" /><N x={15} y={12} /></Ic>
          <Ic><Dots /><text x="5" y="9" fontSize="11" textAnchor="middle">A</text><N x={2} y={12} /><path d="M9 10h4l-2-2m2 2l-2 2" stroke="#222" fill="none" /><text x="17" y="9" fontSize="8" textAnchor="middle">A</text><N x={15} y={12} /></Ic>
        </div>
        <div className="ml-[2px] h-[34px] w-px bg-[#ccc]" />
        <div className="ml-[5px] flex">
          <Ic><path d="M3.500 3.500v13M3.500 3.500h13" stroke="#999" strokeWidth="1.500" /><N x={1} y={1} /><N x={14} y={0} /><N x={1} y={13} /><Wheel /></Ic>
          <Ic><path d="M3.500 3.500v13M3.500 3.500h13" stroke="#d11" strokeWidth="2" /><N x={1} y={1} c="#bbb" /><N x={14} y={0} c="#bbb" /><N x={1} y={13} c="#bbb" /><Wheel /></Ic>
          <Ic><path d="M3.500 3.500v13M3.500 3.500h13" stroke="#bbb" strokeWidth="1.500" /><g stroke="#d11" strokeWidth="1.400" fill="#ddd"><path d="M1 1h5v5H1zM14 0h5v5h-5zM1 13h5v5H1z" /></g><Wheel /></Ic>
          <Ic><path d="M2.500 3.500v13M4.500 5v12M3.500 2.500h13M3.500 4.500h13" stroke="#d11" /><N x={1} y={1} c="#bbb" /><N x={14} y={0} c="#bbb" /><N x={1} y={13} c="#bbb" /><Wheel /></Ic>
          <Ic><g fill="#b9c3d4" stroke="#4b5f86"><path d="M2 2h6v6H2zM16 1l4 4-4 4-4-4z" /><circle cx="5" cy="15" r="3.500" /><path d="M16 11l4 7h-8z" /></g></Ic>
          <Ic><g stroke="#3b5f9c" fill="none"><path d="M4 4h4l3-3 3 6 2-3M4 10h3l3-2 3 4 4-2M4 16q6-4 12 0" /></g><g><N x={1} y={1} c="#aaa" s={4} /><N x={1} y={8} c="#aaa" s={4} /><N x={1} y={14} c="#aaa" s={4} /><N x={16} y={1} c="#aaa" s={4} /><N x={16} y={8} c="#aaa" s={4} /><N x={16} y={14} c="#aaa" s={4} /></g></Ic>
          <Ic><N x={1} y={1} c="#aaa" s={3} /><N x={5} y={5} c="#aaa" /><N x={11} y={11} c="#999" s={8} /></Ic>
          <Ic><path d="M4 3h14" stroke="#3b5f9c" /><path d="M4 10h14" stroke="#3b5f9c" strokeWidth="2" /><path d="M4 16h14" stroke="#3b5f9c" strokeWidth="3" /><N x={2} y={1} c="#aaa" s={4} /><N x={2} y={8} c="#aaa" s={4} /><N x={2} y={14} c="#aaa" s={4} /><N x={15} y={1} c="#aaa" s={4} /><N x={15} y={8} c="#aaa" s={4} /><N x={15} y={14} c="#aaa" s={4} /></Ic>
          <Ic><text x="0" y="8" fontSize="10" fill="#c22">Aa</text><Wheel /></Ic>
          <Ic><g fontSize="7" fontWeight="bold"><text x="9" y="6">T</text><text x="1" y="13">L</text><text x="15" y="13">R</text><text x="8.500" y="19">B</text></g><N x={9} y={8} s={4} /></Ic>
        </div>
        <div className="ml-[4px] flex h-5 w-9 items-center justify-center rounded-[3px] border border-[#999] bg-linear-to-b from-[#fafafa] to-[#e0e0e0] text-[12px] text-black">Aa</div>
      </div>
    </div>
  );
}

function GraphPanel() {
  return (
    <div className="flex h-[938px] w-[927px] flex-col border-t-2 border-[#c6df55] bg-white">
      <div className={`flex h-[25px] shrink-0 items-center text-[12px] text-[#eee] ${HEADBG}`}>
        <div className="flex h-full w-[141px] items-center border-r border-white pl-[10px]">
          <Hand />
          <span className="mb-px ml-[4px] text-[11px] font-semibold tracking-[-0.5px]">Navigate in graph</span>
        </div>
        <div className="flex w-[120px] items-center pl-[8px]">
          <Tri className="rotate-90 text-white" />
          <span className="ml-[12px]"><Hand /></span>
          <svg width="18" height="16" viewBox="0 0 18 16" className="ml-[9px]">
            <path d="M1 1v12l3-3 2 5 2-1-2-5h4z" fill="#000" />
            <text x="9" y="13" fontSize="15" fontFamily="Noto Sans, sans-serif" fill="#000">?</text>
          </svg>
          <svg width="16" height="16" viewBox="0 0 16 16" className="ml-[8px]">
            <rect x="1" y="1" width="14" height="14" fill="#2f5c9c" stroke="#fff" strokeDasharray="3 1.500" />
          </svg>
          <Tri className="ml-[10px] -rotate-90 text-white" />
        </div>
        <div className="h-full w-px bg-[#bbb]" />
        <div className="mb-px ml-[10px] w-[557px] overflow-hidden whitespace-nowrap tracking-[-0.47px]">
          GraphML - 'filename'="/home/sebastien/Documents/heia-1718/VisuDNA-II/BIOGRID-ORGANISM-Arabidopsis
        </div>
        <Tri className="ml-[11px] text-white" />
        <div className="ml-[11px]"><Link /></div>
        <div className="ml-[9px] h-full w-px bg-[#bbb]" />
        <div className="ml-[5px]"><Target /></div>
        <div className="ml-[6px]"><Cross s={12} w={1.300} /></div>
      </div>
      <div className="relative h-[911px] overflow-hidden">
        <GraphCanvas />
        <GraphTools />
        <SideTab text="Scene" active cls="right-[2px] top-[11px] h-[124px] opacity-90" />
        <SideTab text="Layers" cls="right-[2px] top-[136px] h-[125px] opacity-90" />
        <div className="absolute right-px top-[747px] h-[129px] w-[128px] border-2 border-[#777] bg-[#ff5f5f]">
          <div className="flex h-[9px] w-[9px] items-center justify-center bg-[#ddd] pb-px text-[10px] leading-none text-black">x</div>
        </div>
      </div>
    </div>
  );
}

/* ---------- bottom bar ---------- */
const Badge = ({ n, text, cls }: { n: string; text: string; cls: string }) => (
  <div className="flex h-[15px] overflow-hidden rounded-[2px] border border-[#999] text-[11px] font-semibold leading-[13px]">
    <div className="w-[17px] bg-[#777] text-center font-normal text-white">{n}</div>
    <div className={`bg-linear-to-b from-[#ececec] to-[#cacaca] pl-[5px] text-center tracking-[-0.2px] text-black ${cls}`}>{text}</div>
  </div>
);

function BottomBar() {
  return (
    <div className="flex h-[27px] items-center border-b border-t border-b-[#777] border-t-black bg-linear-to-b from-[#4b4b4b] to-[#3a3a3a] pb-[2px]">
      <svg width="11" height="11" className="ml-[10px]"><rect x=".5" y=".5" width="10" height="10" fill="none" stroke="#ccc" /><path d="M1 1h4v9H1z" fill="#ccc" /></svg>
      <svg width="11" height="11" className="ml-[11px]"><rect x=".5" y=".5" width="10" height="10" fill="none" stroke="#ccc" /><path d="M1 7h9v3H1z" fill="#ccc" /></svg>
      <svg width="16" height="16" viewBox="0 0 16 16" className="ml-[18px]"><path d="M6 1h4v5h5v4h-5v5H6v-5H1V6h5z" fill="#b4d64a" /></svg>
      <span className="ml-[3px] w-[69px] text-[11px] font-semibold tracking-[-0.3px] text-white">Add panel</span>
      <Badge n="1" text="Expose" cls="w-[60px]" />
      <div className="w-[12px]" />
      <Badge n="2" text="Search" cls="w-[60px]" />
      <div className="w-[12px]" />
      <Badge n="3" text="Python REPL" cls="w-[80px]" />
      <div className="ml-[458px] flex items-center text-[11px] text-white">
        <svg width="6" height="10"><path d="M6 0v10L0 5z" fill="#fff" /></svg>
        <span className="w-[53px] text-center">1 / 1</span>
        <svg width="6" height="10"><path d="M0 0v10l6-5z" fill="#fff" /></svg>
      </div>
      <div className="ml-auto mr-[7px] flex gap-[18px]">
        <svg width="12" height="14"><rect x=".5" y=".5" width="11" height="13" fill="none" stroke="#bbb" /></svg>
        <svg width="12" height="14"><rect x=".5" y=".5" width="11" height="13" fill="none" stroke="#bbb" /><path d="M6 0v14" stroke="#bbb" strokeWidth="2" /></svg>
        <svg width="12" height="14"><rect x=".5" y=".5" width="11" height="13" fill="none" stroke="#bbb" /><path d="M0 7h12" stroke="#bbb" strokeWidth="2" /></svg>
      </div>
    </div>
  );
}

export default function App() {
  return (
    <div className="flex h-[1051px] w-[1920px] flex-col overflow-hidden bg-[#4a4a4a] font-['Noto_Sans',sans-serif]">
      <svg width="0" height="0" className="absolute">
        <defs>
          <linearGradient id="gPlay" x1="0" y1="0" x2="0" y2="1"><stop offset="0" stopColor="#d2e36b" /><stop offset="1" stopColor="#8fba30" /></linearGradient>
          <linearGradient id="gStar" x1="0" y1="0" x2="0" y2="1"><stop offset="0" stopColor="#ffd583" /><stop offset="1" stopColor="#fb9f1c" /></linearGradient>
          <linearGradient id="gDoc" x1="0" y1="0" x2="0" y2="1"><stop offset="0" stopColor="#fff" /><stop offset="1" stopColor="#ddd" /></linearGradient>
          <linearGradient id="gArr" x1="0" y1="0" x2="1" y2="0"><stop offset="0" stopColor="#f2405a" /><stop offset="1" stopColor="#5a5ad8" /></linearGradient>
        </defs>
      </svg>
      <header className="h-[64px] shrink-0 border-t border-[#f6f6f6] bg-linear-to-b from-[#e2e2e2] to-[#c9c9c9] text-[#2c2c2c]">
        <div className="relative flex h-[31px] items-center justify-center text-[16px] font-semibold tracking-[0.27px]">
          Tulip 5.0 [Tulip] - unsaved project* - [ Debug mode ]
          <div className="absolute right-[9px] top-[6px] flex gap-[17px]">
            <div className="flex h-[15px] w-[15px] items-center justify-center rounded-full border border-[#999] bg-[#eee]"><Tri className="h-[4px] w-[7px] text-[#444]" /></div>
            <div className="flex h-[15px] w-[15px] items-center justify-center rounded-full border border-[#999] bg-[#eee]"><Cross c="#444" s={7} /></div>
          </div>
        </div>
        <nav className="flex h-[32px] items-center pl-[12px] text-[16px] tracking-[-0.3px] text-[#333] [&_u]:underline-offset-[4px]">
          <span className="w-[45px]">Fi<u>l</u>e</span>
          <span className="w-[47px]"><u>E</u>dit</span>
          <span className="w-[80px]"><u>W</u>indow</span>
          <span><u>H</u>elp</span>
        </nav>
      </header>
      <div className="flex h-[965px]">
        <div className="w-[425px]">
          <PanelTitle title="Algorithms" dock cls="pl-[24px]" />
          <div className="flex">
            <SideBar />
            <LeftPanel />
          </div>
        </div>
        <div className="w-[3px] bg-[#c0c0c0]" />
        <div className="w-[1492px]">
          <div className="flex h-[938px]">
            <TablePanel />
            <div className="w-[3px] bg-[#b0b0b0]" />
            <GraphPanel />
          </div>
          <BottomBar />
        </div>
      </div>
      <footer className="h-[22px] bg-linear-to-b from-[#545454] to-[#444]" />
    </div>
  );
}
